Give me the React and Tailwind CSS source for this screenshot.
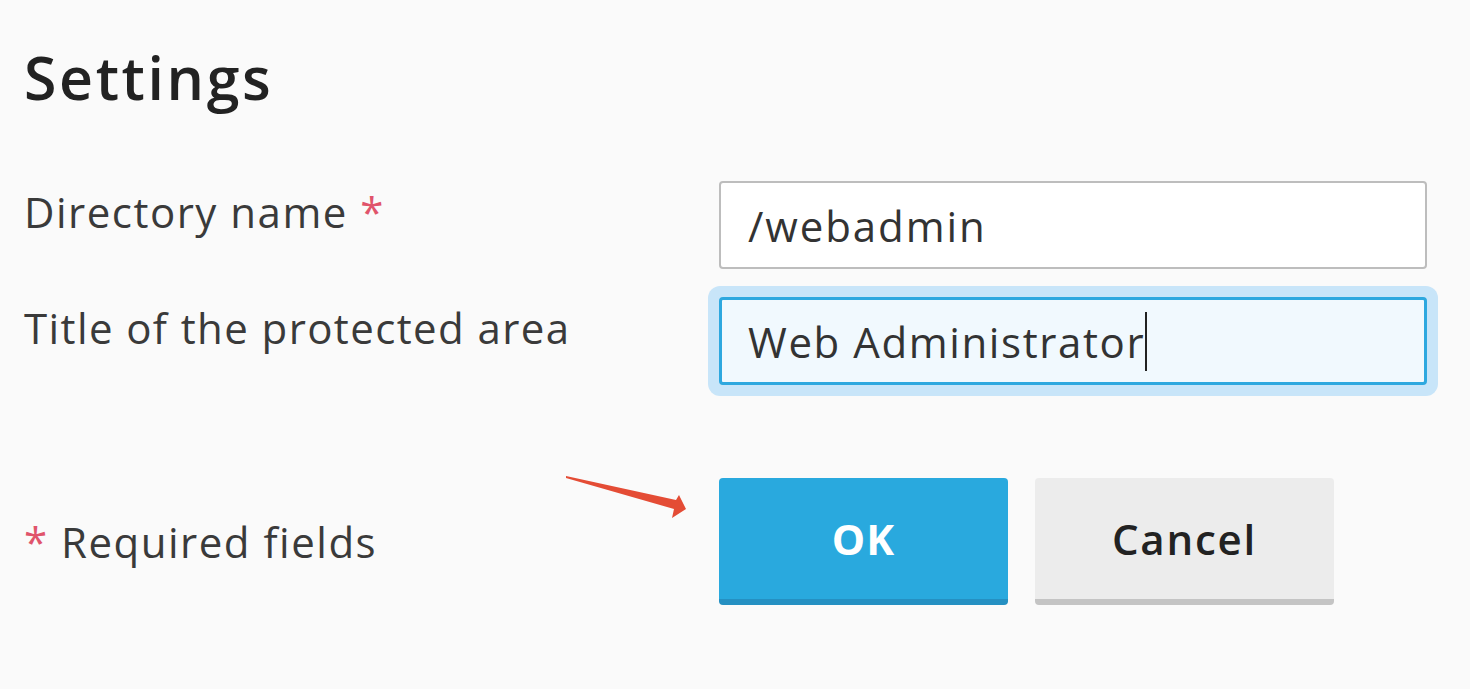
import React from 'react';

const font = { fontFamily: '"Open Sans", "Noto Sans", sans-serif' };

function Arrow() {
  return (
    <svg className="absolute left-0 top-0 pointer-events-none" width="1470" height="689">
      <polygon
        points="566,476 676,500 679,495 686,509 672,518 674,509 566,478"
        fill="#e44c35"
      />
    </svg>
  );
}

export default function App() {
  return (
    <div className="relative w-[1470px] h-[689px] bg-[#fafafa] text-[#333] overflow-hidden" style={font}>
      <div className="pl-[24px] pt-[42px]">
        <h1 className="text-[59px] leading-[70px] font-semibold tracking-[2.6px] text-[#222]">Settings</h1>

        <div className="mt-[69px] flex flex-col gap-[28px]">
          <div className="flex">
            <label className="w-[695px] pt-[5px] text-[42px] leading-[52px] tracking-[1.5px] text-[#3a3a3a]">
              Directory name <span className="text-[#e0546b]">*</span>
            </label>
            <div className="w-[708px] h-[88px] rounded-[4px] border-2 border-[#bdbdbd] bg-white pl-[27px] flex items-center text-[42px] tracking-[1.9px] text-[#333]">
              /webadmin
            </div>
          </div>
          <div className="flex">
            <label className="w-[695px] pt-[5px] text-[42px] leading-[52px] tracking-[1.4px] text-[#3a3a3a]">
              Title of the protected area
            </label>
            <div className="w-[708px] h-[88px] rounded-[4px] border-[3px] border-[#2ea8df] bg-[#f1f9fe] pl-[26px] flex items-center text-[42px] tracking-[1.6px] text-[#333] shadow-[0_0_0_11px_#c8e5f9]">
              Web Administrator
              <span className="inline-block w-[2px] h-[59px] bg-[#222]" />
            </div>
          </div>
        </div>

        <div className="mt-[93px] flex items-center">
          <div className="w-[695px] pt-[1px] text-[42px] leading-[52px] tracking-[1.5px] text-[#3a3a3a]">
            <span className="text-[#e0546b]">*</span> Required fields
          </div>
          <div className="flex gap-[27px]">
            <button className="w-[289px] h-[127px] rounded-[4px] bg-[#29a9de] border-b-[6px] border-[#2590c2] text-white text-[42px] font-bold tracking-[1px]">
              OK
            </button>
            <button className="w-[299px] h-[127px] rounded-[4px] bg-[#ececec] border-b-[6px] border-[#c4c4c4] text-[#222] text-[42px] font-semibold tracking-[1.8px]">
              Cancel
            </button>
          </div>
        </div>
      </div>
      <Arrow />
    </div>
  );
}
